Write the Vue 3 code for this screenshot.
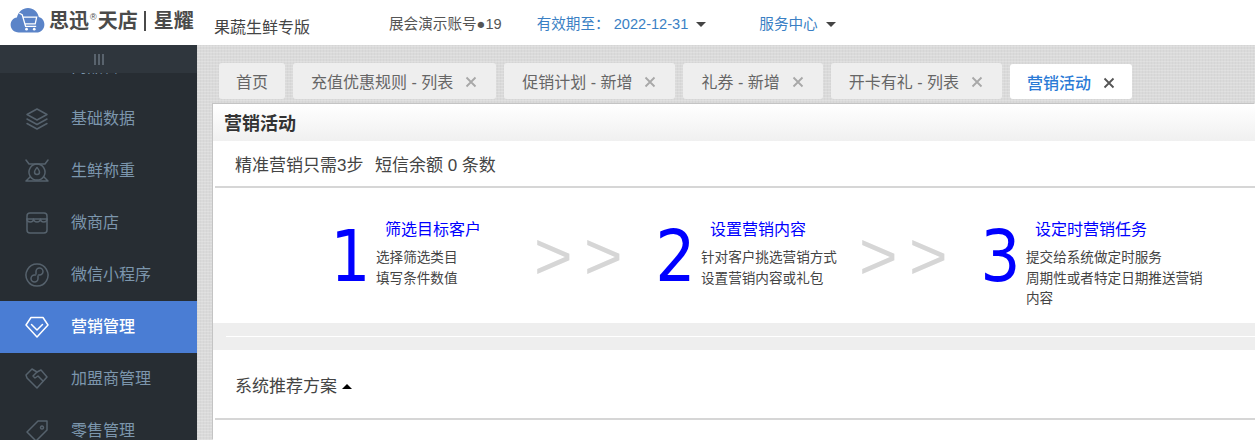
<template>
  <div class="page">
    <header class="topbar">
      <div class="logo">
        <svg class="logo-mark" viewBox="0 0 36 28" width="35" height="27">
          <path d="M9 26.500C4 26.500.5 23 .5 18.500c0-4 2.600-7 6.500-7.600C8.500 4.700 13 1 18.500 1c5.700 0 10 3.700 11.200 9.300 3.600.8 5.800 4 5.800 7.800 0 4.800-3.500 8.400-8.300 8.400z" fill="#5b84c8" />
          <path d="M9.500 6.500l3 1.500 3.500 12h11M13.500 10.500h14l-1.500 7H15.500" fill="none" stroke="#fff" stroke-width="1.300" />
          <circle cx="17" cy="23" r="1.400" fill="#fff" />
          <circle cx="25" cy="23" r="1.400" fill="#fff" />
        </svg>
        <span class="logo-text">思迅<sup>®</sup>天店</span>
        <i class="logo-sep"></i>
        <span class="logo-text">星耀</span>
      </div>
      <span class="edition">果蔬生鲜专版</span>
      <span class="account">展会演示账号●19</span>
      <span class="expiry">有效期至：&nbsp;2022-12-31<i class="caret"></i></span>
      <span class="service">服务中心<i class="caret"></i></span>
    </header>

    <div class="body">
      <aside class="sidebar">
        <div class="toggle"><span></span><span></span><span></span></div>
        <ul class="menu">
          <li v-for="item in menu" :key="item.name" :class="{ active: item.active }">
            <svg viewBox="0 0 24 24" width="24" height="24" fill="none" stroke="currentColor" stroke-width="1.500" stroke-linejoin="round" stroke-linecap="round">
              <path v-for="d in item.icon" :key="d" :d="d" />
            </svg>
            <span>{{ item.name }}</span>
          </li>
        </ul>
      </aside>

      <main class="main">
        <nav class="tabs">
          <div v-for="tab in tabs" :key="tab.name" class="tab" :class="{ current: tab.current, plain: !tab.close }">
            <span>{{ tab.name }}</span>
            <svg v-if="tab.close" class="close" viewBox="0 0 12 12" width="12" height="12">
              <path d="M1.500 1.500l9 9M10.500 1.500l-9 9" stroke="currentColor" stroke-width="1.800" />
            </svg>
          </div>
        </nav>

        <section class="panel">
          <h2 class="panel-title">营销活动</h2>
          <div class="intro">精准营销只需3步&nbsp;&nbsp;<span class="balance">短信余额 0 条数</span></div>

          <div class="steps">
            <template v-for="(step, i) in steps" :key="step.no">
              <div class="step" :class="{ last: i === steps.length - 1 }">
                <div class="no">{{ step.no }}</div>
                <div class="step-body">
                  <div class="step-title">{{ step.title }}</div>
                  <p v-for="line in step.lines" :key="line">{{ line }}</p>
                </div>
              </div>
              <div v-if="i < steps.length - 1" class="arrows">&gt;&gt;</div>
            </template>
          </div>

          <div class="band"><hr /></div>

          <div class="recommend">系统推荐方案<i class="caret-up"></i></div>
        </section>
      </main>
    </div>
  </div>
</template>

<script setup>
const menu = [
  { name: '商品管理', icon: ['M5 4h5v6H5zM14 4h5v6h-5z'] },
  { name: '基础数据', icon: ['M12 2l10 5.500-10 5.500L2 7.500z', 'M2 12l10 5.500L22 12', 'M2 16.500L12 22l10-5.500'] },
  { name: '生鲜称重', icon: ['M1 1l3 4h16l3-4', 'M12 5a8 8 0 1 0 .01 0z', 'M12 8.500c-1.500 2-2.500 3-2.500 4.500a2.500 2.500 0 0 0 5 0c0-1.500-1-2.500-2.500-4.500z', 'M5 18l-4 4h22l-4-4'] },
  { name: '微商店', icon: ['M5 2h14a3 3 0 0 1 3 3v3H2V5a3 3 0 0 1 3-3z', 'M2 8c0 4 6.500 4 6.500 0 .5 4 6.500 4 7 0 0 4 6.500 4 6.500 0', 'M2 8v11a3 3 0 0 0 3 3h14a3 3 0 0 0 3-3V8'] },
  { name: '微信小程序', icon: ['M12 1a11 11 0 1 0 .01 0z', 'M11 11V8.500a3.500 3.500 0 1 1 3.500 3.500h-1', 'M13 13v2.500A3.500 3.500 0 1 1 9.500 12h1'] },
  { name: '营销管理', active: true, icon: ['M6 2.500h12L23 10 12 22 1 10z', 'M6.500 9.500L12 15l5.500-5.500'] },
  { name: '加盟商管理', icon: ['M7 2l5 3 4-2 6 7-10 11L2 11 1 8z', 'M12 5L8 9l2 2 3-2 5 5'] },
  { name: '零售管理', icon: ['M13 2h9v9L11 22 2 13z', 'M17 7a1.500 1.500 0 1 0 .01 0z'] }
]

const tabs = [
  { name: '首页' },
  { name: '充值优惠规则 - 列表', close: true },
  { name: '促销计划 - 新增', close: true },
  { name: '礼券 - 新增', close: true },
  { name: '开卡有礼 - 列表', close: true },
  { name: '营销活动', close: true, current: true }
]

const steps = [
  { no: 1, title: '筛选目标客户', lines: ['选择筛选类目', '填写条件数值'] },
  { no: 2, title: '设置营销内容', lines: ['针对客户挑选营销方式', '设置营销内容或礼包'] },
  { no: 3, title: '设定时营销任务', lines: ['提交给系统做定时服务', '周期性或者特定日期推送营销', '内容'] }
]
</script>

<style scoped>
.page {
  width: 1255px;
  height: 440px;
  overflow: hidden;
  font-family: "Liberation Sans", "Noto Sans CJK SC", sans-serif;
  color: #444;
}

.topbar {
  display: flex;
  align-items: center;
  height: 45px;
  background: #fff;
  font-size: 14.600px;
}

.logo {
  display: flex;
  align-items: center;
  width: 196px;
  padding: 0 0 4px 10px;
  box-sizing: border-box;
  flex: none;
}

.logo-mark {
  margin-right: 4px;
}

.logo-text {
  font-size: 20px;
  line-height: 24px;
  font-weight: 700;
  color: #4a4a4a;
  white-space: nowrap;
}

.logo-text sup {
  font-size: 9px;
  font-weight: 400;
  line-height: 0;
  vertical-align: 8px;
  margin: 0 1px;
}

.logo-sep {
  width: 2px;
  height: 20px;
  margin: 0 8px 0 6px;
  background: #4a4a4a;
}

.edition {
  margin: 7px 0 0 18px;
  font-size: 16px;
  color: #444;
}

.account {
  margin-left: 79px;
  color: #555;
}

.expiry {
  margin-left: 35px;
  color: #3a7fc4;
}

.service {
  margin-left: 53px;
  color: #3a7fc4;
}

.caret {
  display: inline-block;
  margin-left: 8px;
  vertical-align: 2px;
  border: 5px solid transparent;
  border-top-color: #444;
  border-bottom: 0;
}

.body {
  display: flex;
  height: 395px;
}

.sidebar {
  width: 197px;
  flex: none;
  background: #272d33;
  overflow: hidden;
}

.toggle {
  position: relative;
  z-index: 1;
  display: flex;
  justify-content: center;
  align-items: center;
  gap: 2px;
  height: 28px;
  background: #2f363d;
}

.toggle span {
  width: 2px;
  height: 11px;
  background: #59636d;
}

.menu {
  margin: -32px 0 0;
  padding: 0;
  list-style: none;
}

.menu li {
  display: flex;
  align-items: center;
  height: 52px;
  padding-left: 25px;
  font-size: 16px;
  color: #7c96ad;
}

.menu li svg {
  flex: none;
  margin-right: 22px;
  color: #56626d;
}

.menu li span {
  margin-top: -4px;
}

.menu li.active {
  background: #4a7dd4;
  color: #fff;
  font-weight: 500;
}

.menu li.active svg {
  color: #fff;
}

.main {
  flex: 1;
  min-width: 0;
  background-color: #dadada;
  background-image:
    repeating-linear-gradient(0deg, rgba(255, 255, 255, .18) 0 1px, transparent 1px 3px),
    repeating-linear-gradient(90deg, rgba(0, 0, 0, .025) 0 1px, transparent 1px 3px);
}

.tabs {
  display: flex;
  align-items: flex-end;
  gap: 8px;
  height: 54px;
  padding-left: 22px;
}

.tab {
  display: flex;
  align-items: center;
  justify-content: center;
  gap: 12px;
  height: 36px;
  padding: 0 19px 0 18px;
  border-radius: 3px;
  background: #eee;
  font-size: 16px;
  color: #666;
  white-space: nowrap;
}

.tab.plain {
  padding: 0 17px;
}

.tab .close {
  margin-top: 2px;
  color: #a8a8a8;
}

.tab.current {
  height: 35px;
  padding: 0 17px;
  background: #fff;
  color: #2a7ad6;
  font-weight: 500;
}

.tab.current .close {
  color: #555;
}

.panel {
  height: 336px;
  margin: 5px 0 0 16px;
  background: #fff;
  box-shadow: -1px -1px 0 #c4c4c4;
}

.panel-title {
  margin: 0;
  height: 37px;
  padding-left: 11px;
  font-size: 18px;
  line-height: 40px;
  font-weight: 700;
  color: #333;
  background: linear-gradient(#fff, #f0f0f0);
}

.intro {
  height: 45px;
  margin-left: 2px;
  padding-left: 20px;
  border-bottom: 2px solid #d6d6d6;
  font-size: 17px;
  line-height: 49px;
  color: #444;
}

.balance {
  margin-left: 2px;
}

.steps {
  display: flex;
  align-items: flex-start;
  height: 135px;
  padding: 31px 0 0 117px;
  box-sizing: border-box;
}

.step {
  display: flex;
  flex: none;
  width: 202px;
}

.step.last {
  width: auto;
}

.no {
  flex: none;
  width: 46px;
  font-family: "DejaVu Sans", sans-serif;
  font-size: 72px;
  line-height: 72px;
  margin-top: 1px;
  color: #00f;
  transform: scaleX(.88);
  transform-origin: 3px 0;
}

.step-body {
  width: 186px;
  font-size: 13.600px;
  line-height: 20.500px;
  color: #444;
}

.step-title {
  margin: 0 0 7px 9px;
  font-size: 16px;
  line-height: 22px;
  color: #00f;
}

.step-body p {
  margin: 0;
}

.arrows {
  flex: none;
  width: 123px;
  padding-left: 2px;
  box-sizing: border-box;
  font-size: 66px;
  line-height: 74px;
  letter-spacing: 11.500px;
  color: #d6d6d6;
}

.band {
  height: 27px;
  padding: 13px 0 0 13px;
  box-sizing: border-box;
  background: #eee;
}

.band hr {
  margin: 0;
  border: 0;
  height: 1px;
  background: #fff;
}

.recommend {
  height: 68px;
  margin-left: 2px;
  padding-left: 20px;
  border-bottom: 2px solid #d6d6d6;
  font-size: 17px;
  line-height: 74px;
  color: #444;
}

.caret-up {
  display: inline-block;
  margin-left: 5px;
  vertical-align: 3px;
  border: 5px solid transparent;
  border-bottom-color: #000;
  border-top: 0;
}
</style>
